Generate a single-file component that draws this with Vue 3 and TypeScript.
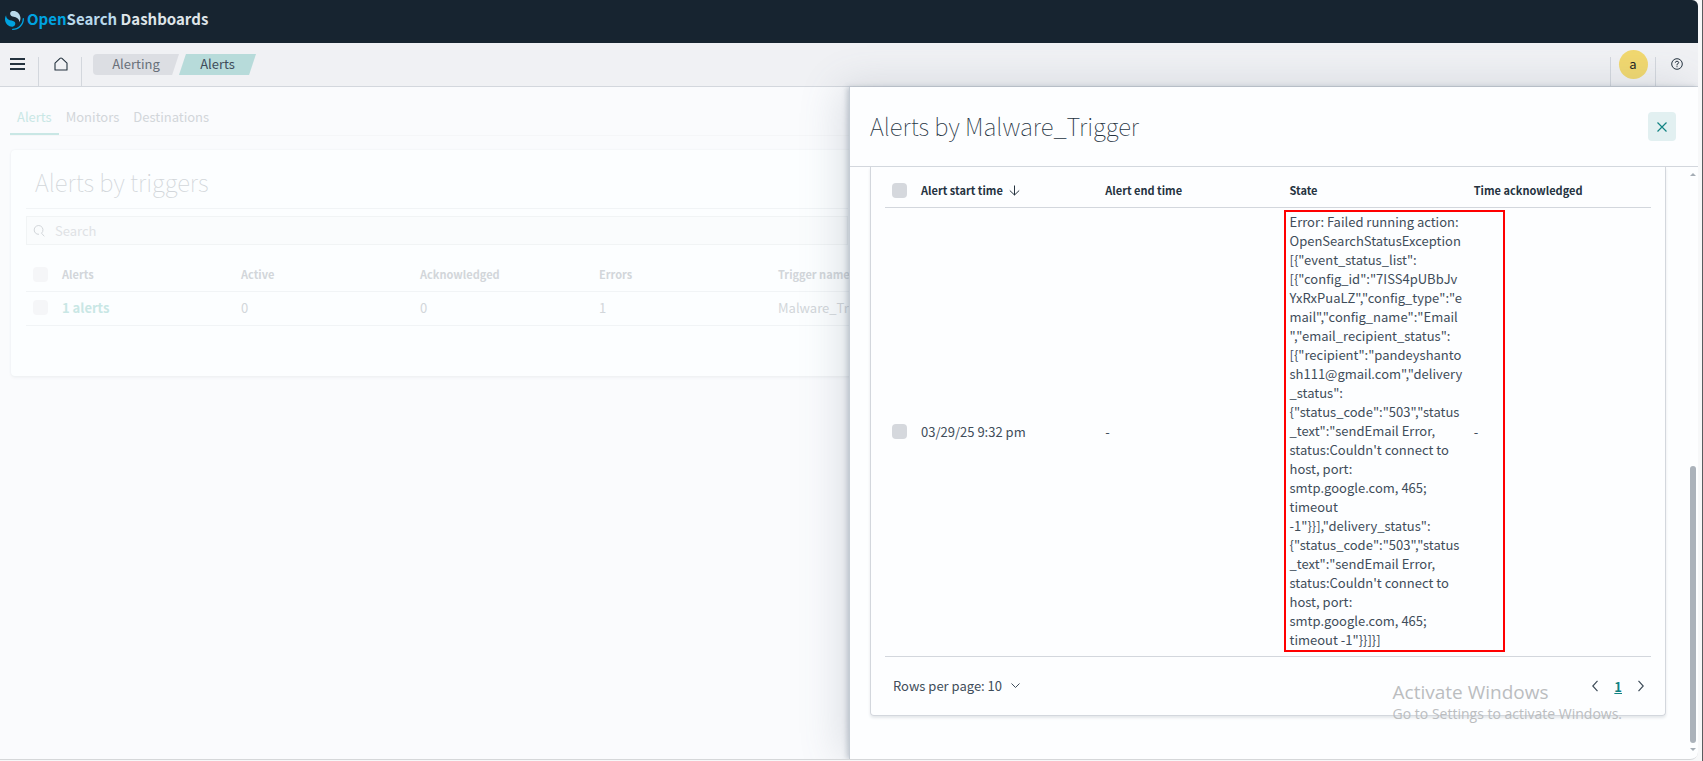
<script setup lang="ts">
interface TriggerRow {
  alerts: string
  active: number
  acknowledged: number
  errors: number
  trigger: string
}

const triggerRows: TriggerRow[] = [
  { alerts: '1 alerts', active: 0, acknowledged: 0, errors: 1, trigger: 'Malware_Trigger' },
]

const stateLines: string[] = [
  'Error: Failed running action:',
  'OpenSearchStatusException',
  '[{"event_status_list":',
  '[{"config_id":"7ISS4pUBbJv',
  'YxRxPuaLZ","config_type":"e',
  'mail","config_name":"Email',
  '","email_recipient_status":',
  '[{"recipient":"pandeyshanto',
  'sh111@gmail.com","delivery',
  '_status":',
  '{"status_code":"503","status',
  '_text":"sendEmail Error,',
  "status:Couldn't connect to",
  'host, port:',
  'smtp.google.com, 465;',
  'timeout',
  '-1"}}],"delivery_status":',
  '{"status_code":"503","status',
  '_text":"sendEmail Error,',
  "status:Couldn't connect to",
  'host, port:',
  'smtp.google.com, 465;',
  'timeout -1"}}]}]',
]
</script>

<template>
  <div class="window">
    <div class="app">
      <header class="brand">
        <a class="logo" href="#" aria-label="OpenSearch Dashboards home">
          <svg width="19" height="19" viewBox="0 0 64 64" aria-hidden="true">
            <path fill="#00a3e0" d="M61.7 23.5a2.3 2.3 0 0 0-2.3 2.3c0 18.6-15 33.6-33.6 33.6a2.3 2.3 0 1 0 0 4.6C47 64 64 47 64 25.8a2.3 2.3 0 0 0-2.3-2.3Z" />
            <path fill="#00a3e0" d="M3.9 14C1.7 17.6-.4 22.4.1 29.2c.9 14 13.6 24.6 25.5 23.5 4.7-.5 9.5-4.3 9.1-11.2-.2-3-1.7-4.8-4-6.1-2.3-1.3-5.1-2.1-8.4-3-4-1.1-8.5-2.4-12.1-5C6.1 24.3 3 20.6 3.9 14Z" />
            <path fill="#b9d9eb" d="M48.1 38c2.2-3.6 4.3-8.4 3.9-15.200C51 8.800 38.300-1.800 26.400-.7c-4.700.5-9.500 4.300-9 11.200.2 3 1.600 4.800 4 6.100 2.200 1.300 5.100 2.100 8.300 3 4 1.100 8.600 2.400 12.100 5 4.200 3.100 7.100 6.800 6.300 13.400Z" />
          </svg>
          <span class="logo-text"><span class="open">Open</span><span class="search">Search</span> Dashboards</span>
        </a>
      </header>

      <div class="bar">
        <button class="bar-item menu" aria-label="Toggle navigation">
          <svg width="15" height="14" viewBox="0 0 15 14" fill="none" stroke="currentColor" stroke-width="2"><path d="M0 2h15M0 7h15M0 12h15" /></svg>
        </button>
        <a class="bar-item home" href="#" aria-label="Home">
          <svg width="14" height="14" viewBox="0 0 14 14" fill="none" stroke="currentColor" stroke-width="1.100" stroke-linejoin="round"><path d="M1 13V6.200L6 1.400q1-.9 2 0l5 4.800V13Z" /></svg>
        </a>
        <nav class="crumbs" aria-label="Breadcrumbs">
          <a class="crumb first" href="#">Alerting</a>
          <a class="crumb last" href="#" aria-current="page">Alerts</a>
        </nav>
        <div class="bar-end">
          <button class="bar-item user" aria-label="Account"><span class="avatar">a</span></button>
          <button class="bar-item help" aria-label="Help">
            <svg width="12" height="12" viewBox="0 0 12 12" fill="none" stroke="currentColor"><circle cx="6" cy="6" r="5.300" /><path d="M4.300 4.700Q4.500 3.200 6 3.200T7.700 4.700Q7.700 5.500 6 6.300V7.400M6 8.200V9.200" /></svg>
          </button>
        </div>
      </div>

      <div class="stage">
        <main class="page">
          <nav class="tabs" aria-label="Alerting sections">
            <a class="tab selected" href="#">Alerts</a>
            <a class="tab" href="#">Monitors</a>
            <a class="tab" href="#">Destinations</a>
          </nav>
          <section class="card">
            <h1 class="title">Alerts by triggers</h1>
            <div class="search-box">
              <svg width="12" height="12" viewBox="0 0 12 12" fill="none" stroke="currentColor"><path d="M6 9.300A4.400 4.400 0 1 1 8.500 8.200L11.300 11.300" /></svg>
              <input type="search" placeholder="Search" aria-label="Search alerts" />
            </div>
            <table class="triggers">
              <thead>
                <tr>
                  <th class="pick"><input type="checkbox" aria-label="Select all triggers" /></th>
                  <th>Alerts</th>
                  <th>Active</th>
                  <th>Acknowledged</th>
                  <th>Errors</th>
                  <th>Trigger name</th>
                </tr>
              </thead>
              <tbody>
                <tr v-for="row in triggerRows" :key="row.trigger">
                  <td class="pick"><input type="checkbox" aria-label="Select trigger" /></td>
                  <td><a href="#">{{ row.alerts }}</a></td>
                  <td>{{ row.active }}</td>
                  <td>{{ row.acknowledged }}</td>
                  <td>{{ row.errors }}</td>
                  <td>{{ row.trigger }}</td>
                </tr>
              </tbody>
            </table>
          </section>
        </main>

        <aside class="flyout" role="dialog" aria-labelledby="flyout-title">
          <div class="flyout-head">
            <h2 id="flyout-title" class="title">Alerts by Malware_Trigger</h2>
            <button class="close" aria-label="Close">
              <svg width="10" height="10" viewBox="0 0 10 10" fill="none" stroke="currentColor" stroke-width="1.200"><path d="M.5.5l9 9M9.500.5l-9 9" /></svg>
            </button>
          </div>
          <div class="flyout-body">
            <section class="panel">
              <table class="alerts">
                <thead>
                  <tr>
                    <th class="pick"><input type="checkbox" aria-label="Select all alerts" /></th>
                    <th>
                      <button class="sort">Alert start time
                        <svg width="11" height="11" viewBox="0 0 11 11" fill="none" stroke="currentColor"><path d="M5.500.5V10M.8 5.500l4.700 4.500 4.700-4.500" /></svg>
                      </button>
                    </th>
                    <th>Alert end time</th>
                    <th>State</th>
                    <th>Time acknowledged</th>
                  </tr>
                </thead>
                <tbody>
                  <tr>
                    <td class="pick"><input type="checkbox" aria-label="Select alert" /></td>
                    <td>03/29/25 9:32 pm</td>
                    <td>-</td>
                    <td class="state"><div v-for="(line, i) in stateLines" :key="i">{{ line }}</div><span class="marker"></span></td>
                    <td>-</td>
                  </tr>
                </tbody>
              </table>
              <div class="pager">
                <button class="per-page">Rows per page: 10
                  <svg width="9" height="5" viewBox="0 0 9 5" fill="none" stroke="currentColor"><path d="M.5.5l4 4 4-4" /></svg>
                </button>
                <nav class="pages" aria-label="Pagination">
                  <button aria-label="Previous page"><svg width="6" height="12" viewBox="0 0 6 12" fill="none" stroke="currentColor" stroke-width="1.200"><path d="M5.500.8L.8 6l4.700 5.200" /></svg></button>
                  <a href="#" aria-current="page">1</a>
                  <button aria-label="Next page"><svg width="6" height="12" viewBox="0 0 6 12" fill="none" stroke="currentColor" stroke-width="1.200"><path d="M.5.8L5.200 6 .5 11.200" /></svg></button>
                </nav>
              </div>
            </section>
            <div class="scroll" aria-hidden="true">
              <i class="up"></i>
              <i class="thumb"></i>
              <i class="down"></i>
            </div>
          </div>
        </aside>
      </div>
    </div>
    <div class="watermark">
      <p class="big">Activate Windows</p>
      <p class="small">Go to Settings to activate Windows.</p>
    </div>
  </div>
</template>

<style>
body {
  background: #f7f8f9;
}
</style>

<style scoped>
.window {
  box-sizing: border-box;
  position: relative;
  height: 100vh;
  padding: 0 4px 1px 0;
  border-right: 1px solid #5a5c5f;
  font-family: "Noto Sans CJK SC", "Noto Sans", sans-serif;
  font-size: 13px;
  line-height: 19px;
  color: #3f4d5a;
}
.app {
  box-sizing: border-box;
  height: 100%;
  display: flex;
  flex-direction: column;
  border-bottom: 1px solid #d5d7d9;
  border-radius: 0 6px 8px 0;
  overflow: hidden;
  background: #fafbfd;
}
a {
  color: inherit;
  text-decoration: none;
}
button {
  padding: 0;
  border: 0;
  background: none;
  font: inherit;
  color: inherit;
}
svg {
  display: block;
  flex: none;
}
.brand {
  flex: none;
  height: 43px;
  background: #172430;
}
.logo {
  display: flex;
  align-items: center;
  gap: 3px;
  padding: 7px 5px;
  color: #dfe5e8;
}
.logo-text {
  padding-bottom: 3px;
  font-size: 15px;
  line-height: 24px;
  font-weight: 700;
}
.open {
  color: #00a3e0;
}
.search {
  color: #b9d9eb;
}
.bar {
  flex: none;
  display: flex;
  height: 43px;
  background: #f0f1f4;
  border-bottom: 1px solid #d3d7dd;
}
.bar-item {
  box-sizing: border-box;
  display: flex;
  align-items: center;
  justify-content: center;
  height: 29px;
  margin-top: 14px;
  padding-bottom: 15px;
  color: #25333f;
}
.menu {
  width: 39px;
  padding-left: 10px;
  justify-content: flex-start;
  border-right: 1px solid #d3d7dd;
}
.home {
  width: 43px;
  padding-left: 1px;
  border-right: 1px solid #d3d7dd;
}
.crumbs {
  display: flex;
  padding: 11px;
  line-height: 19px;
}
.crumb {
  height: 21px;
  text-align: center;
}
.first {
  width: 86px;
  border-radius: 4px 0 0 4px;
  background: #dcdee3;
  color: #69707a;
  clip-path: polygon(0 0, 100% 0, 92% 100%, 0 100%);
}
.last {
  width: 77px;
  background: #b7dbda;
  clip-path: polygon(9% 0, 100% 0, 91% 100%, 0 100%);
}
.bar-end {
  margin-left: auto;
  display: flex;
}
.user {
  width: 45px;
  padding-bottom: 14px;
  border-left: 1px solid #d3d7dd;
}
.help {
  width: 43px;
  border-left: 1px solid #d3d7dd;
}
.avatar {
  flex: none;
  width: 29px;
  height: 29px;
  border-radius: 50%;
  background: #f1d86f;
  color: #222;
  line-height: 28px;
}
.stage {
  flex: 1;
  min-height: 0;
  display: flex;
}
.page {
  box-sizing: border-box;
  flex: 1 1 50%;
  min-width: 0;
  padding: 10px 0 0 10px;
  color: #d2d6da;
  white-space: nowrap;
}
.tabs {
  display: flex;
  height: 38px;
  border-bottom: 1px solid #f5f6f8;
}
.tab {
  padding: 10px 7px 7px;
}
.selected {
  color: #c9e7e5;
  border-bottom: 2px solid #c9e7e5;
}
.card {
  margin: 14px -14px 0 1px;
  padding: 15px;
  height: 196px;
  border-radius: 4px;
  background: #fcfeff;
  box-shadow: 0 0 2px #e9ecef, 0 2px 3px #f1f3f5;
}
.title {
  margin: 0;
  font-size: 24px;
  line-height: 34px;
  font-weight: 100;
}
.card .title {
  padding: 0 9px 9px;
  border-bottom: 1px solid #f1f4f6;
}
.search-box {
  display: flex;
  align-items: center;
  gap: 10px;
  height: 27px;
  margin-top: 7px;
  padding: 0 6px;
  border: 1px solid #f1f4f5;
  background: #fafcfd;
}
.search-box input {
  flex: 1;
  padding: 0 0 1px;
  border: 0;
  background: none;
  font: inherit;
}
.search-box input::placeholder {
  color: #dfe2e5;
}
table {
  width: 100%;
  table-layout: fixed;
  border-collapse: collapse;
}
th,
td {
  padding: 0 7px;
  text-align: left;
}
th {
  font-size: 11px;
  font-weight: 700;
}
.pick {
  width: 15px;
}
.pick input {
  appearance: none;
  display: block;
  width: 15px;
  height: 15px;
  margin: 0;
  border-radius: 4px;
  background: #d5d8dd;
}
.triggers {
  margin-top: 13px;
  width: 924px;
}
.triggers th,
.triggers td {
  height: 33px;
  border-bottom: 1px solid #f1f4f6;
}
.triggers td {
  height: 31px;
  padding-bottom: 2px;
}
.triggers a {
  color: #c9e7e5;
  font-weight: 700;
}
.triggers .pick input {
  background: #f5f6f8;
}
.flyout {
  position: relative;
  box-sizing: border-box;
  flex: 1 1 50%;
  min-width: 0;
  display: flex;
  flex-direction: column;
  border-left: 1px solid #c5ccd4;
  background: #fdfeff;
  box-shadow: -2px 0 5px rgba(90, 105, 125, 0.3), -8px 0 40px rgba(90, 105, 125, 0.2);
}
.flyout-head {
  flex: none;
  display: flex;
  align-items: center;
  justify-content: space-between;
  height: 79px;
  padding: 0 22px 0 20px;
  border-bottom: 1px solid #d3d7dd;
}
.flyout-head .title {
  padding-bottom: 2px;
  color: #25333f;
}
.close {
  width: 28px;
  height: 29px;
  border-radius: 4px;
  background: #e2f0f1;
  color: #128383;
  display: flex;
  align-items: center;
  justify-content: center;
}
.flyout-body {
  flex: 1;
  min-height: 0;
  display: flex;
  justify-content: space-between;
  align-items: flex-start;
  padding-left: 20px;
}
.panel {
  flex: 1;
  padding: 6px 14px 0;
  border: 1px solid #d3d7dd;
  border-top: 0;
  border-radius: 0 0 4px 4px;
  box-shadow: 0 2px 3px #e4e7ea;
}
.alerts th {
  height: 33px;
  padding-top: 1px;
  color: #25333f;
}
.alerts th,
.alerts td {
  border-bottom: 1px solid #d3d7dd;
}
.alerts td {
  padding-bottom: 2px;
}
.sort {
  display: flex;
  align-items: center;
  gap: 6px;
}
.alerts .state {
  position: relative;
  padding-top: 4px;
  padding-bottom: 7px;
  white-space: nowrap;
}
.marker {
  position: absolute;
  top: 2px;
  bottom: 4px;
  left: 1px;
  width: 217px;
  border: 2px solid #f00;
}
.pager {
  display: flex;
  justify-content: space-between;
  align-items: center;
  height: 58px;
  padding: 0 7px 0 8px;
}
.per-page {
  display: flex;
  align-items: center;
  gap: 9px;
  padding-bottom: 2px;
}
.pages {
  display: flex;
  align-items: center;
  gap: 16px;
}
.pages a {
  color: #128383;
  font-weight: 700;
  text-decoration: underline;
}
.scroll {
  align-self: stretch;
  width: 8px;
  margin-left: 23px;
  padding: 6px 1px 8px 0;
  display: flex;
  flex-direction: column;
  align-items: center;
}
.up,
.down {
  border: 3px solid transparent;
}
.up {
  border-top: 0;
  border-bottom-color: #a5adb5;
}
.down {
  border-bottom: 0;
  border-top-color: #a5adb5;
}
.thumb {
  width: 6px;
  height: 48%;
  margin-top: auto;
  margin-bottom: 5px;
  border-radius: 3px;
  background: #abb2ba;
}
.watermark {
  position: absolute;
  right: 80px;
  bottom: 37px;
  color: #bbbdbf;
  font-family: "Open Sans", "Noto Sans", sans-serif;
  pointer-events: none;
}
.watermark p {
  margin: 0;
}
.big {
  font-size: 19px;
  line-height: 24px;
}
.small {
  font-size: 14px;
  line-height: 20px;
}
</style>
